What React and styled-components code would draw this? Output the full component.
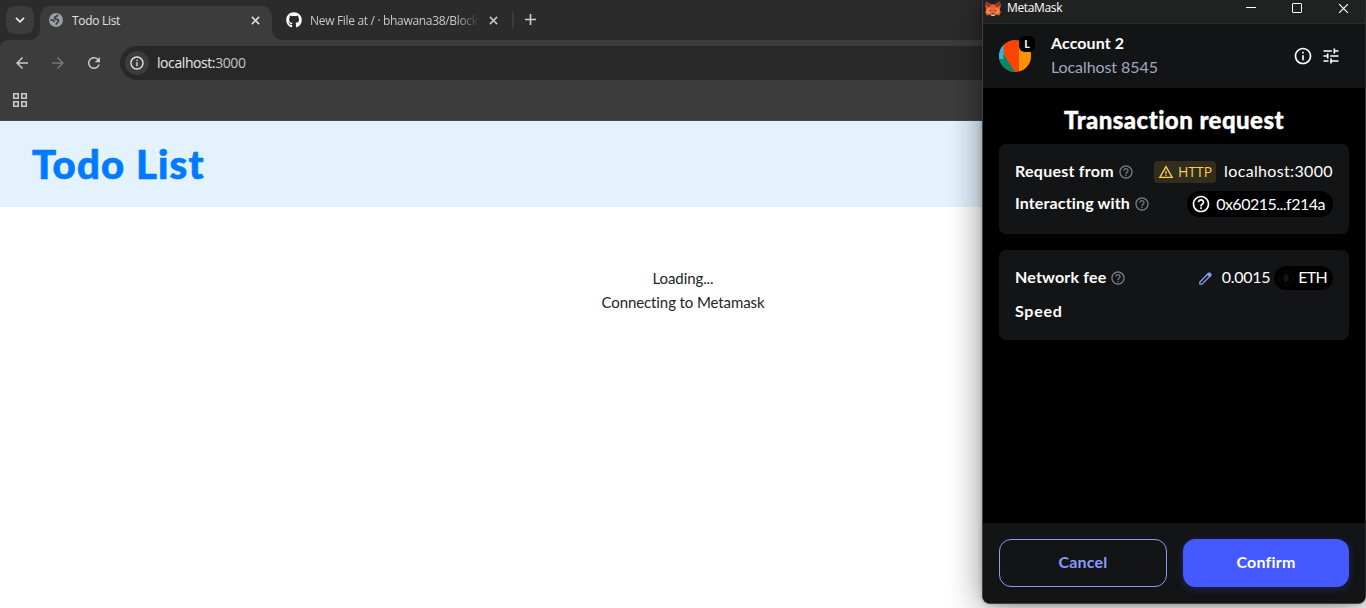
import React from "react";
import styled, { createGlobalStyle } from "styled-components";
import { MdArrowBack, MdArrowForward, MdRefresh, MdTune, MdHelpOutline, MdInfoOutline, MdWarningAmber } from "react-icons/md";
import { FaGithub } from "react-icons/fa";

const Global = createGlobalStyle`
  * { box-sizing: border-box; }
  html, body { margin: 0; overflow: hidden; }
  body { font-variant-ligatures: none; }
  svg { display: block; flex: none; }
`;

const ui = `"Open Sans", "Noto Sans", sans-serif`;
const human = `Lato, "Open Sans", sans-serif`;

const Screen = styled.div`
  position: relative;
  width: 1366px;
  height: 608px;
  overflow: hidden;
  background: #fff;
  display: flex;
  flex-direction: column;
`;

const Label = styled.span`
  display: block;
  white-space: nowrap;
  letter-spacing: ${(p) => p.$track || 0}px;
`;

/* Browser */
const TabStrip = styled.div`
  height: 40px;
  background: #2b2b2b;
  display: flex;
  align-items: flex-end;
  padding-left: 6px;
`;
const TabSearch = styled.div`
  width: 28px;
  height: 28px;
  margin: 0 6px 6px 0;
  border-radius: 9px;
  background: #3c3c3c;
  display: grid;
  place-items: center;
`;
const Tab = styled.div`
  position: relative;
  width: ${(p) => p.$width}px;
  height: 34px;
  display: flex;
  align-items: center;
  padding: 0 ${(p) => p.$right}px 6px ${(p) => p.$left}px;
  border-radius: 10px 10px 0 0;
  background: ${(p) => (p.$active ? "#3c3c3c" : "transparent")};
  color: ${(p) => (p.$active ? "#e3e3e3" : "#c7c7c7")};
  font: 12px/16px ${ui};
  &::before, &::after {
    content: "";
    display: ${(p) => (p.$active ? "block" : "none")};
    position: absolute;
    bottom: 0;
    width: 10px;
    height: 10px;
  }
  &::before { left: -10px; background: radial-gradient(circle at 0 0, transparent 9.5px, #3c3c3c 10px); }
  &::after { right: -10px; background: radial-gradient(circle at 100% 0, transparent 9.5px, #3c3c3c 10px); }
`;
const TabTitle = styled(Label)`
  flex: 1;
  margin: 1px 10px 0 ${(p) => p.$gap}px;
  mask-image: ${(p) => (p.$fade ? "linear-gradient(90deg, #000 146px, transparent 169px)" : "none")};
`;
const Divider = styled.div`
  width: 2px;
  height: 16px;
  margin: 0 11px 12px 4px;
  background: #3c3c3c;
`;
const NewTab = styled.div`
  margin-bottom: 15px;
`;
const ToolbarBack = styled.div`
  background: #2b2b2b;
`;
const Toolbar = styled.div`
  height: 81px;
  background: #3c3c3c;
  border-radius: 8px 0 0 0;
  border-bottom: 1px solid #48494b;
  color: #c9c9c9;
`;
const NavRow = styled.div`
  height: 46px;
  display: flex;
  align-items: center;
  padding-left: 13px;
  gap: 18px;
`;
const Omnibox = styled.div`
  flex: 1;
  height: 34px;
  margin-left: -1px;
  display: flex;
  align-items: center;
  gap: 8px;
  padding-left: 5px;
  border-radius: 17px 0 0 17px;
  background: #282828;
  color: #e8e8e8;
  font: 14px/20px ${ui};
`;
const SiteChip = styled.div`
  width: 24px;
  height: 24px;
  border-radius: 50%;
  background: #3c3c3c;
  display: grid;
  place-items: center;
`;
const Port = styled.span`
  color: #c4c4c4;
`;
const Bookmarks = styled.div`
  padding: 7px 13px;
`;

/* Web page */
const PageHeader = styled.header`
  height: 86px;
  flex: none;
  padding: 0 32px;
  display: flex;
  align-items: center;
  background: #e3f2fd;
`;
const PageTitle = styled.h1`
  margin: 0;
  font: 900 40px/48px ${human};
  letter-spacing: 1.2px;
  -webkit-text-stroke: 0.7px #007bff;
  color: #007bff;
`;
const Status = styled.main`
  display: flex;
  flex-direction: column;
  align-items: center;
  margin-top: 59px;
  font: 15px/24px ${human};
  color: #212529;
`;

/* Wallet window */
const Wallet = styled.section`
  position: absolute;
  left: 982px;
  top: -8px;
  width: 384px;
  height: 612px;
  display: flex;
  flex-direction: column;
  overflow: hidden;
  border: 1px solid #3f4142;
  border-right-color: #2b2d2e;
  border-radius: 8px;
  background: #000;
  color: #fff;
  font-family: ${human};
`;
const WalletShadow = styled.div`
  position: absolute;
  left: 982px;
  top: -8px;
  width: 384px;
  height: 612px;
  border-radius: 8px;
  box-shadow: 0 4px 34px rgba(0, 0, 0, 0.46), 0 0 4px rgba(0, 0, 0, 0.2);
`;
const TitleBar = styled.div`
  height: 31px;
  padding: 0 16px 0 2px;
  display: flex;
  align-items: center;
  gap: 6px;
  background: #202221;
  border-bottom: 1px solid #2a2c2d;
  font: 12px/16px ${ui};
`;
const WindowButtons = styled.div`
  margin-left: auto;
  display: flex;
  gap: 36px;
`;
const AccountBar = styled.div`
  height: 64px;
  padding: 0 24px 0 16px;
  display: flex;
  align-items: center;
  background: #131416;
`;
const Avatar = styled.div`
  position: relative;
  width: 32px;
  height: 32px;
`;
const NetworkBadge = styled.div`
  position: absolute;
  right: -4px;
  top: -4px;
  width: 16px;
  height: 16px;
  border-radius: 6px;
  background: #000;
  display: grid;
  place-items: center;
  font: 700 10px/14px ${ui};
`;
const AccountText = styled.div`
  margin-left: 20px;
  padding-bottom: 2px;
  font-size: 16px;
  line-height: 24px;
`;
const AccountName = styled(Label)`
  font-weight: 700;
`;
const NetworkName = styled(Label)`
  color: #a3a7c0;
`;
const BarActions = styled.div`
  margin-left: auto;
  display: flex;
  gap: 8px;
`;
const Body = styled.div`
  flex: 1;
  padding: 16px;
  display: flex;
  flex-direction: column;
  gap: 16px;
`;
const Heading = styled.h2`
  margin: 0 0 -8px;
  text-align: center;
  font: 900 24px/32px ${human};
  letter-spacing: 0.45px;
  -webkit-text-stroke: 0.4px #fff;
`;
const Card = styled.div`
  height: 90px;
  padding: 16px;
  display: flex;
  flex-direction: column;
  gap: ${(p) => p.$gap}px;
  border-radius: 7px;
  background: #131416;
`;
const Row = styled.div`
  height: 24px;
  display: flex;
  align-items: center;
  font-size: 16px;
  line-height: 22px;
`;
const RowText = styled(Label)`
  padding-bottom: 2px;
`;
const RowName = styled(RowText)`
  font-weight: 700;
  margin-right: 4px;
`;
const FeeAmount = styled(RowText)`
  margin-left: 10px;
`;
const RowValue = styled.div`
  margin-left: auto;
  display: flex;
  align-items: center;
`;
const Warning = styled.div`
  height: 22px;
  padding: 0 4px;
  margin-right: 8px;
  display: flex;
  align-items: center;
  gap: 4px;
  border-radius: 4px;
  background: #332d1e;
  color: #f8cf55;
  font: 14px/22px ${ui};
`;
const Pill = styled.div`
  height: ${(p) => p.$height}px;
  padding: 0 ${(p) => p.$right}px 0 4px;
  display: flex;
  align-items: center;
  gap: ${(p) => p.$gap}px;
  border-radius: 13px;
  background: #000;
  margin-left: ${(p) => p.$left || 0}px;
`;
const Footer = styled.div`
  height: 80px;
  padding: 16px;
  display: flex;
  gap: 16px;
  background: #131416;
`;
const Button = styled.button`
  width: ${(p) => (p.$primary ? 166 : 168)}px;
  height: 48px;
  padding: 0 0 2px;
  border: 1px solid ${(p) => (p.$primary ? "#4459ff" : "#8b99ff")};
  border-radius: 12px;
  background: ${(p) => (p.$primary ? "#4459ff" : "transparent")};
  color: ${(p) => (p.$primary ? "#fff" : "#8b99ff")};
  box-shadow: ${(p) => (p.$primary ? "0 2px 8px rgba(68, 89, 255, 0.25)" : "none")};
  font: 700 16px/24px ${human};
  letter-spacing: 0.2px;
`;

const Cross = ({ size, width = 1.6 }) => (
  <svg width={size} height={size} viewBox="0 0 10 10" fill="none" stroke="currentColor" strokeWidth={width}>
    <path d="M1 1l8 8M9 1l-8 8" />
  </svg>
);
const Globe = () => (
  <svg width="14" height="14" viewBox="0 0 14 14">
    <circle cx="7" cy="7" r="7" fill="#9aa0a6" />
    <path d="M9.200 2C8 2.200 8 3.600 6.600 3.800C5 4 5.200 5.800 6.600 6.100C8.200 6.300 9.600 6.500 9.400 8C9.200 9.400 7.600 9.600 7 11.800M1.400 6.800l3 .4 1 2" fill="none" stroke="#3c3c3c" strokeWidth="1.700" />
  </svg>
);
const Fox = () => (
  <svg width="16" height="15" viewBox="0 0 32 30">
    <path fill="#f0602e" d="M2 1l11 6h6L30 1l1.500 9-2 7 2 6-3 6-7-2-3 3h-5l-3-3-7 2-3-6 2-6-2-7z" />
    <path fill="#8e3b25" d="M2 1l10 6-2 6-8-3zM30 1L20 7l2 6 8-3z" />
    <path fill="#fb8a50" d="M3 17l7-4 3 8-3 5-7-3zM29 17l-7-4-3 8 3 5 7-3z" />
    <path fill="#322b2b" d="M9 17l4 3-4 1zM23 17l-4 3 4 1zM13 25h6l1 3h-8z" />
    <path fill="#d8c4b5" d="M11 27h10l-2 3h-6z" />
  </svg>
);
const Apps = () => (
  <svg width="14" height="14" viewBox="0 0 14 14" fill="none" stroke="currentColor" strokeWidth="1.6">
    <path d="M.8.8h4.400v4.400H.8zM8.800.8h4.400v4.400H8.800zM.8 8.800h4.400v4.400H.8zM8.800 8.800h4.400v4.400H8.800z" />
  </svg>
);
const Jazzicon = () => (
  <svg width="32" height="32" viewBox="0 0 32 32">
    <clipPath id="round"><circle cx="16" cy="16" r="16" /></clipPath>
    <g clipPath="url(#round)">
      <path fill="#fc4500" d="M0 0h32v32H0z" />
      <path fill="#f99200" d="M20 0h12v32H20z" />
      <path fill="#1cbcea" d="M0 0h4.500v19H0z" />
      <path fill="#03876f" d="M0 19h4.500V14L16 32H0z" />
    </g>
  </svg>
);
const Pencil = () => (
  <svg width="13" height="13" viewBox="0 0 12 12" fill="none" stroke="#8b99ff" strokeWidth="1.200">
    <path d="M.8 9.200L8 2l2 2-7.200 7.200H.8z" />
    <path d="M8 2l1-1h1l1 1v1l-1 1z" fill="#8b99ff" />
  </svg>
);
const Eth = () => (
  <svg width="16" height="16" viewBox="0 0 16 16">
    <circle cx="8" cy="8" r="7.500" fill="#020202" stroke="#090909" />
    <path fill="#171717" d="M8 2.500l3 5.500-3 5-3-5z" />
  </svg>
);

export default function App() {
  return (
    <Screen>
      <Global />
      <TabStrip>
        <TabSearch>
          <svg width="10" height="6" viewBox="0 0 10 6" fill="none" stroke="#e3e3e3" strokeWidth="1.800"><path d="M1 .8l4 4 4-4" /></svg>
        </TabSearch>
        <Tab $active $width={232} $left={9} $right={12}>
          <Globe />
          <TabTitle $gap={9} $track={-0.3}>Todo List</TabTitle>
          <Cross size={9} width={1.7} />
        </Tab>
        <Tab $width={236} $left={14} $right={10}>
          <FaGithub size={16} color="#fff" />
          <TabTitle $gap={8} $fade $track={-0.32}>New File at / · bhawana38/Block</TabTitle>
          <Cross size={9} width={1.7} />
        </Tab>
        <Divider />
        <NewTab>
          <svg width="11" height="11" viewBox="0 0 11 11" stroke="#d0d0d0" strokeWidth="1.600"><path d="M5.500 0v11M0 5.500h11" /></svg>
        </NewTab>
      </TabStrip>
      <ToolbarBack>
        <Toolbar>
          <NavRow>
            <MdArrowBack size={18} />
            <MdArrowForward size={18} color="#767676" />
            <MdRefresh size={18} />
            <Omnibox>
              <SiteChip><MdInfoOutline size={16} /></SiteChip>
              <Label $track={-0.42}>localhost:<Port>3000</Port></Label>
            </Omnibox>
          </NavRow>
          <Bookmarks><Apps /></Bookmarks>
        </Toolbar>
      </ToolbarBack>
      <PageHeader><PageTitle>Todo List</PageTitle></PageHeader>
      <Status>
        <Label $track={-0.1}>Loading...</Label>
        <Label $track={-0.1}>Connecting to Metamask</Label>
      </Status>

      <WalletShadow />
      <Wallet>
        <TitleBar>
          <Fox />
          <Label $track={-0.35}>MetaMask</Label>
          <WindowButtons>
            <svg width="10" height="10" viewBox="0 0 10 10" stroke="#fff"><path d="M0 4.500h10" /></svg>
            <svg width="10" height="10" viewBox="0 0 10 10" fill="none" stroke="#fff"><rect x=".5" y=".5" width="9" height="9" rx=".5" /></svg>
            <Cross size={11} width={1.1} />
          </WindowButtons>
        </TitleBar>
        <AccountBar>
          <Avatar><Jazzicon /><NetworkBadge>L</NetworkBadge></Avatar>
          <AccountText>
            <AccountName $track={0.1}>Account 2</AccountName>
            <NetworkName $track={-0.08}>Localhost 8545</NetworkName>
          </AccountText>
          <BarActions><MdInfoOutline size={20} /><MdTune size={20} /></BarActions>
        </AccountBar>
        <Body>
          <Heading>Transaction request</Heading>
          <Card $gap={8}>
            <Row>
              <RowName $track={0.25}>Request from</RowName>
              <MdHelpOutline size={16} color="#777b8a" />
              <RowValue>
                <Warning><MdWarningAmber size={16} /><Label>HTTP</Label></Warning>
                <RowText $track={0.35}>localhost:3000</RowText>
              </RowValue>
            </Row>
            <Row>
              <RowName $track={0.15}>Interacting with</RowName>
              <MdHelpOutline size={16} color="#777b8a" />
              <RowValue>
                <Pill $height={26} $right={8} $gap={5}><MdHelpOutline size={20} /><Label $track={-0.5}>0x60215...f214a</Label></Pill>
              </RowValue>
            </Row>
          </Card>
          <Card $gap={10}>
            <Row>
              <RowName $track={0.18}>Network fee</RowName>
              <MdHelpOutline size={16} color="#777b8a" />
              <RowValue>
                <Pencil />
                <FeeAmount $track={-0.3}>0.0015</FeeAmount>
                <Pill $height={24} $right={6} $gap={4} $left={4}><Eth /><RowText $track={-0.7}>ETH</RowText></Pill>
              </RowValue>
            </Row>
            <Row><RowName $track={0.75}>Speed</RowName></Row>
          </Card>
        </Body>
        <Footer>
          <Button>Cancel</Button>
          <Button $primary>Confirm</Button>
        </Footer>
      </Wallet>
    </Screen>
  );
}
